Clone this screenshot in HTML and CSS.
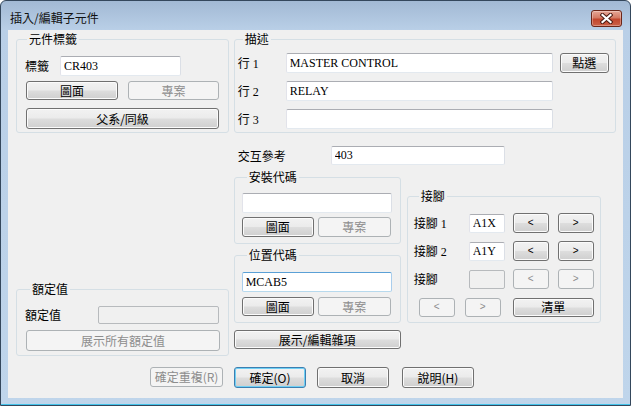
FILE: index.html
```html
<!DOCTYPE html>
<html>
<head>
    <meta charset="utf-8">
    <title>插入/編輯子元件</title>
    <link rel="stylesheet" href="styles.css">
</head>
<body>
    <div class="window">
        <div class="titlebar">
            <span class="title">插入/編輯子元件</span>
            <button class="close-btn">
                <svg width="13" height="11" viewBox="0 0 13 11">
                    <path d="M2.5 2 L10.5 9 M10.5 2 L2.5 9" stroke="#4a1a12" stroke-width="4.2" stroke-linecap="square"/>
                    <path d="M2.5 2 L10.5 9 M10.5 2 L2.5 9" stroke="#fff" stroke-width="2.2" stroke-linecap="square"/>
                </svg>
            </button>
        </div>
        <div class="client">
            <div class="top-row">
                <fieldset class="group tag-group">
                    <legend class="legend-tight">元件標籤</legend>
                    <div class="row">
                        <span class="lbl tag-lbl">標籤</span>
                        <input class="txt tag-input" value="CR403">
                    </div>
                    <div class="row btn-row">
                        <button class="btn tag-btn">圖面</button>
                        <button class="btn tag-btn tag-btn-2" disabled>專案</button>
                    </div>
                    <button class="btn parent-btn">父系/同級</button>
                </fieldset>
                <fieldset class="group desc-group">
                    <legend>描述</legend>
                    <div class="row desc-row">
                        <span class="lbl desc-lbl">行 1</span>
                        <input class="txt desc-input" value="MASTER CONTROL">
                        <button class="btn pick-btn">點選</button>
                    </div>
                    <div class="row desc-row">
                        <span class="lbl desc-lbl">行 2</span>
                        <input class="txt desc-input" value="RELAY">
                    </div>
                    <div class="row desc-row desc-row-last">
                        <span class="lbl desc-lbl">行 3</span>
                        <input class="txt desc-input" value="">
                    </div>
                </fieldset>
            </div>

            <div class="mid">
                <div class="left-col">
                    <fieldset class="group rating-group">
                        <legend>額定值</legend>
                        <div class="row">
                            <span class="lbl rating-lbl">額定值</span>
                            <input class="txt rating-input" disabled>
                        </div>
                        <button class="btn rating-btn" disabled>展示所有額定值</button>
                    </fieldset>
                </div>
                <div class="right-col">
                    <div class="row xref-row">
                        <span class="lbl xref-lbl">交互參考</span>
                        <input class="txt xref-input" value="403">
                    </div>
                    <div class="codes-row">
                        <div class="codes-col">
                            <fieldset class="group code-group install-group">
                                <legend>安裝代碼</legend>
                                <input class="txt code-input" value="">
                                <div class="row code-btns">
                                    <button class="btn code-btn">圖面</button>
                                    <button class="btn code-btn code-btn-2" disabled>專案</button>
                                </div>
                            </fieldset>
                            <fieldset class="group code-group location-group">
                                <legend>位置代碼</legend>
                                <input class="txt code-input focused" value="MCAB5">
                                <div class="row code-btns">
                                    <button class="btn code-btn short">圖面</button>
                                    <button class="btn code-btn code-btn-2 short" disabled>專案</button>
                                </div>
                            </fieldset>
                        </div>
                        <fieldset class="group pins-group">
                            <legend>接腳</legend>
                            <div class="row pin-row">
                                <span class="lbl pin-lbl">接腳 1</span>
                                <input class="txt pin-input" value="A1X">
                                <button class="btn arrow-btn">&lt;</button>
                                <button class="btn arrow-btn arrow-next">&gt;</button>
                            </div>
                            <div class="row pin-row">
                                <span class="lbl pin-lbl">接腳 2</span>
                                <input class="txt pin-input" value="A1Y">
                                <button class="btn arrow-btn">&lt;</button>
                                <button class="btn arrow-btn arrow-next">&gt;</button>
                            </div>
                            <div class="row pin-row">
                                <span class="lbl pin-lbl">接腳</span>
                                <input class="txt pin-input" disabled>
                                <button class="btn arrow-btn" disabled>&lt;</button>
                                <button class="btn arrow-btn arrow-next" disabled>&gt;</button>
                            </div>
                            <div class="row pin-row pin-nav">
                                <button class="btn arrow-btn short" disabled>&lt;</button>
                                <button class="btn arrow-btn page-next short" disabled>&gt;</button>
                                <button class="btn list-btn short">清單</button>
                            </div>
                        </fieldset>
                    </div>
                    <button class="btn misc-btn">展示/編輯雜項</button>
                </div>
            </div>

            <div class="row bottom-row">
                <button class="btn repeat-btn" disabled>確定重複(R)</button>
                <button class="btn dlg-btn default-btn">確定(O)</button>
                <button class="btn dlg-btn">取消</button>
                <button class="btn dlg-btn help-btn">說明(H)</button>
            </div>
        </div>
    </div>
</body>
</html>
```

FILE: styles.css
```css
* {
    box-sizing: border-box;
}
body {
    margin: 0;
    background: #fff;
    color: #000;
    font-family: "Liberation Serif", "Noto Sans CJK TC", serif;
    font-size: 12px;
}
.window {
    width: 631px;
    height: 406px;
    border: 1px solid #34475c;
    border-radius: 6px 6px 0 0;
    padding: 0 7px 7px;
    background: linear-gradient(#a2b9d4, #b9cfe7 29px, #bfd5eb);
    box-shadow: inset 0 -1px 0 #43c3ea;
}
.titlebar {
    height: 29px;
    display: flex;
    justify-content: space-between;
    align-items: flex-start;
}
.title {
    margin: 10px 0 0 2px;
    line-height: 14px;
    font-family: "Noto Sans CJK TC", sans-serif;
    font-size: 12px;
    color: #111;
}
.close-btn {
    width: 31px;
    height: 17px;
    margin: 9px 1px 0 0;
    padding: 0;
    border: 1px solid #6b2619;
    border-radius: 3px;
    background: linear-gradient(#e6a797, #d47a64 45%, #c2462d 55%, #cc6148);
    box-shadow: inset 0 0 0 1px rgba(255, 255, 255, 0.3);
    display: flex;
    align-items: center;
    justify-content: center;
}

.client {
    height: 368px;
    padding: 2px 7px 0 8px;
    background: #f0f0f0;
    border: 1px solid #a8b9cc;
    border-width: 0;
}
.row {
    display: flex;
    align-items: center;
}
.lbl {
    white-space: nowrap;
}

/* group boxes */
.group {
    margin: 0;
    padding: 0;
    min-width: 0;
    border: 1px solid #d5dfe5;
    border-radius: 3px;
}
.group legend {
    margin-left: 5px;
    padding: 0 2px;
    height: 14px;
    line-height: 14px;
    font-family: "Noto Sans CJK TC", sans-serif;
}
.group .legend-tight {
    margin-left: 2px;
}

/* controls */
.txt {
    margin: 0;
    padding: 0 3px;
    height: 20px;
    border: 1px solid;
    border-color: #abadb3 #dbdfe6 #e3e9ef #e2e3ea;
    border-radius: 2px;
    background: #fff;
    font: inherit;
    color: #000;
    outline: none;
}
.txt:disabled {
    background: #f0f0f0;
    border-color: #b7babd;
}
.txt.focused {
    border-color: #5aa0d6 #a9cdec #b7d9ed #a9cdec;
}
.btn {
    margin: 0;
    padding: 0;
    height: 20px;
    border: 1px solid #707070;
    border-radius: 3px;
    background: linear-gradient(#f2f2f2, #ebebeb 48%, #dddddd 52%, #cfcfcf);
    box-shadow: inset 0 0 0 1px #fbfbfb;
    font: inherit;
    color: #000;
    line-height: 16px;
    font-family: "Noto Sans CJK TC", sans-serif;
}
.btn:disabled {
    border-color: #adb2b5;
    background: #f4f4f4;
    box-shadow: none;
    color: #8d8d8d;
}
.short {
    height: 19px;
}

/* top row */
.top-row {
    display: flex;
    gap: 5px;
}
.tag-group {
    width: 213px;
    height: 101px;
    padding: 10px 0 0 8px;
}
.tag-lbl {
    width: 35px;
}
.tag-input {
    width: 121px;
}
.btn-row {
    margin-top: 5px;
    margin-left: 1px;
}
.tag-btn {
    width: 92px;
    height: 19px;
}
.tag-btn-2 {
    width: 91px;
    margin-left: 10px;
}
.parent-btn {
    display: block;
    width: 193px;
    height: 21px;
    margin: 8px 0 0 1px;
}
.desc-group {
    width: 383px;
    height: 101px;
    padding: 7px 0 0 3px;
}
.desc-row {
    height: 20px;
    margin-bottom: 8px;
}
.desc-lbl {
    width: 48px;
}
.desc-input {
    width: 267px;
}
.pick-btn {
    width: 49px;
    margin: -1px 0 0 7px;
}

/* middle */
.mid {
    display: flex;
    gap: 5px;
}
.left-col {
    width: 213px;
    padding-top: 149px;
}
.rating-group {
    height: 74px;
    padding: 10px 0 0 8px;
}
.rating-lbl {
    width: 73px;
}
.rating-input {
    width: 121px;
    height: 18px;
}
.rating-btn {
    display: block;
    width: 194px;
    height: 21px;
    margin: 6px 0 0 1px;
}
.right-col {
    width: 383px;
}
.xref-row {
    margin-top: 13px;
    padding-left: 4px;
}
.xref-lbl {
    width: 93px;
}
.xref-input {
    width: 174px;
    height: 19px;
}
.codes-row {
    display: flex;
    align-items: flex-start;
    margin-top: 5px;
}
.codes-col {
    width: 167px;
}
.install-group {
    height: 74px;
    padding: 9px 0 0 7px;
}
.location-group {
    height: 75px;
    margin-top: 4px;
    padding: 10px 0 0 7px;
}
.code-input {
    display: block;
    width: 150px;
}
.code-btns {
    margin-top: 4px;
}
.location-group .code-btns {
    margin-top: 5px;
}
.code-btn {
    width: 72px;
}
.code-btn-2 {
    width: 73px;
    margin-left: 4px;
}
.pins-group {
    width: 194px;
    height: 134px;
    margin: 19px 0 0 6px;
    padding: 10px 0 0 6px;
}
.pin-row {
    height: 20px;
    margin-bottom: 8px;
}
.pin-lbl {
    width: 55px;
}
.pin-input {
    width: 36px;
    height: 19px;
    margin-right: 8px;
}
.arrow-btn {
    width: 36px;
    font-family: "Liberation Sans", sans-serif;
    font-size: 10px;
}
.arrow-next {
    margin-left: 9px;
}
.pin-nav {
    padding-left: 5px;
}
.page-next {
    margin-left: 10px;
}
.list-btn {
    width: 81px;
    margin-left: 12px;
}
.misc-btn {
    display: block;
    width: 167px;
    height: 19px;
    margin-top: 7px;
}

/* dialog buttons */
.bottom-row {
    align-items: flex-start;
    margin-top: 11px;
}
.repeat-btn {
    width: 73px;
    margin-left: 134px;
}
.dlg-btn {
    width: 72px;
    height: 21px;
    margin-left: 11px;
}
.help-btn {
    margin-left: 13px;
}
.default-btn {
    border-color: #3c7fb1;
    box-shadow: inset 0 0 0 1px #6fd0f5;
}
```
